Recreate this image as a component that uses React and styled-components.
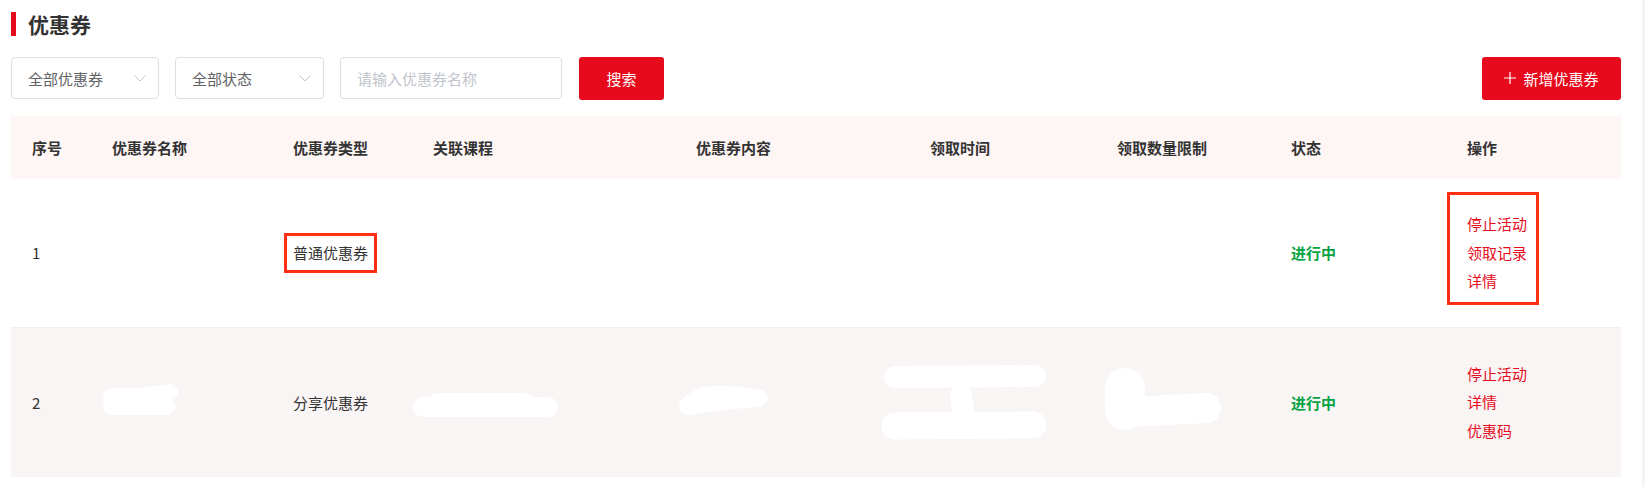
import styled, { createGlobalStyle } from 'styled-components'

const GlobalStyle = createGlobalStyle`
  html, body {
    margin: 0;
    padding: 0;
    background: #fff;
  }
  body {
    font-family: "Noto Sans CJK SC", "Noto Sans", sans-serif;
    color: #333;
  }
`

const RED = '#e60a1c'
const MARK = '#ff2e14'

const Shell = styled.div`
  display: flex;
  height: 487px;
  overflow: hidden;
`

const Page = styled.main`
  flex: 1;
  padding: 12px 21px 0 11px;
`

const ScrollStrip = styled.div`
  width: 3px;
  background: #f4f4f4;
`

const TitleRow = styled.h1`
  margin: 0;
  display: flex;
  align-items: center;
  gap: 12px;
  height: 24px;
  font-size: 21px;
  font-weight: bold;
  color: #333;
  line-height: 24px;

  &::before {
    content: '';
    width: 5px;
    height: 24px;
    background: ${RED};
  }
`

const Toolbar = styled.div`
  display: flex;
  align-items: center;
  margin-top: 21px;
  height: 42px;
`

const Select = styled.div`
  box-sizing: border-box;
  width: ${({ w }) => w}px;
  height: 42px;
  margin-right: 16px;
  padding: 0 12px 0 16px;
  border: 1px solid #dcdfe6;
  border-radius: 4px;
  display: flex;
  align-items: center;
  justify-content: space-between;
  font-size: 15px;
  color: #606266;
`

const Input = styled.div`
  box-sizing: border-box;
  width: 222px;
  height: 42px;
  margin-right: 17px;
  padding: 0 16px;
  border: 1px solid #dcdfe6;
  border-radius: 4px;
  display: flex;
  align-items: center;
  font-size: 15px;
  color: #c0c4cc;
`

const Button = styled.button`
  height: 43px;
  width: ${({ w }) => w}px;
  border: none;
  border-radius: 3px;
  background: ${RED};
  color: #fff;
  font-family: inherit;
  font-size: 15px;
  display: flex;
  align-items: center;
  justify-content: center;
  gap: 7px;
  padding: 0;
  margin-left: ${({ push }) => (push ? 'auto' : '0')};
`

const Table = styled.div`
  margin-top: 17px;
`

const Row = styled.div`
  display: grid;
  grid-template-columns: 80px 181px 140px 263px 234px 187px 174px 176px 175px;
  height: ${({ head }) => (head ? 63 : 149)}px;
  background: ${({ bg }) => bg};
  border-bottom: ${({ line }) => (line ? '1px solid #f0f0f0' : 'none')};
  box-sizing: border-box;
  font-size: 15px;
  font-weight: ${({ head }) => (head ? 'bold' : 'normal')};
  color: #333;
`

const Cell = styled.div`
  position: relative;
  display: flex;
  align-items: center;
  padding-left: 21px;
  line-height: 22px;
`

const Status = styled.span`
  color: #0aa344;
  font-weight: bold;
`

const Ops = styled.div`
  position: relative;
  display: flex;
  flex-direction: column;
  line-height: 28.5px;
  color: ${RED};
`

const Marked = styled.span`
  position: relative;
  display: inline-block;

  &::after {
    content: '';
    position: absolute;
    top: ${({ t }) => t}px;
    bottom: ${({ b }) => b}px;
    left: ${({ l }) => l}px;
    right: ${({ r }) => r}px;
    border: 3px solid ${MARK};
  }
`

const MarkedOps = styled(Ops)`
  &::after {
    content: '';
    position: absolute;
    top: -18px;
    bottom: -9px;
    left: -20px;
    right: -12px;
    border: 3px solid ${MARK};
  }
`

const Redact = styled.svg`
  position: absolute;
  left: ${({ x }) => x}px;
  top: ${({ y }) => y}px;
  overflow: visible;
`

const Chevron = () => (
  <svg width="12" height="7" viewBox="0 0 12 7">
    <polyline points="0.5,0.5 6,6 11.5,0.5" fill="none" stroke="#c0c4cc" strokeWidth="1" />
  </svg>
)

const Plus = () => (
  <svg width="12" height="12" viewBox="0 0 12 12">
    <path d="M6 0 V12 M0 6 H12" stroke="#fff" strokeWidth="1.2" />
  </svg>
)

const Blob = ({ x, y, w, h, strokes }) => (
  <Redact x={x} y={y} width={w} height={h} viewBox={`0 0 ${w} ${h}`}>
    {strokes.map(([d, sw], i) => (
      <path key={i} d={d} fill="none" stroke="#fff" strokeWidth={sw} strokeLinecap="round" strokeLinejoin="round" />
    ))}
  </Redact>
)

const heads = ['序号', '优惠券名称', '优惠券类型', '关联课程', '优惠券内容', '领取时间', '领取数量限制', '状态', '操作']

const App = () => {
  return (
    <Shell>
      <GlobalStyle />
      <Page>
        <TitleRow>优惠券</TitleRow>
        <Toolbar>
          <Select w={148}>
            全部优惠券
            <Chevron />
          </Select>
          <Select w={149}>
            全部状态
            <Chevron />
          </Select>
          <Input>请输入优惠券名称</Input>
          <Button w={85}>搜索</Button>
          <Button w={139} push>
            <Plus />
            新增优惠券
          </Button>
        </Toolbar>

        <Table>
          <Row head bg="#fef5f5">
            {heads.map((h) => (
              <Cell key={h}>{h}</Cell>
            ))}
          </Row>

          <Row line bg="#fff">
            <Cell>1</Cell>
            <Cell />
            <Cell>
              <Marked t={-9} b={-9} l={-9} r={-9}>普通优惠券</Marked>
            </Cell>
            <Cell />
            <Cell />
            <Cell />
            <Cell />
            <Cell>
              <Status>进行中</Status>
            </Cell>
            <Cell>
              <MarkedOps>
                <span>停止活动</span>
                <span>领取记录</span>
                <span>详情</span>
              </MarkedOps>
            </Cell>
          </Row>

          <Row bg="#f9f5f5">
            <Cell>2</Cell>
            <Cell>
              <Blob
                x={11}
                y={56}
                w={76}
                h={32}
                strokes={[
                  ['M9 12 L42 12 Q56 10 68 8', 16],
                  ['M10 22 L64 22', 18],
                ]}
              />
            </Cell>
            <Cell>分享优惠券</Cell>
            <Cell>
              <Blob
                x={0}
                y={65}
                w={146}
                h={24}
                strokes={[
                  ['M11 14 L136 14', 20],
                  ['M26 11 L112 11', 22],
                ]}
              />
            </Cell>
            <Cell>
              <Blob
                x={2}
                y={58}
                w={91}
                h={32}
                strokes={[
                  ['M10 20 Q20 8 42 8 Q62 8 83 12', 16],
                  ['M12 22 Q40 17 82 14', 14],
                ]}
              />
            </Cell>
            <Cell>
              <Blob
                x={-26}
                y={38}
                w={164}
                h={74}
                strokes={[
                  ['M12 11 L152 10', 22],
                  ['M78 29 L80 42', 22],
                  ['M12 60 L150 59', 27],
                ]}
              />
            </Cell>
            <Cell>
              <Blob
                x={9}
                y={44}
                w={113}
                h={55}
                strokes={[
                  ['M20 16 L20 38', 40],
                  ['M22 40 L101 36', 30],
                ]}
              />
            </Cell>
            <Cell>
              <Status>进行中</Status>
            </Cell>
            <Cell>
              <Ops>
                <span>停止活动</span>
                <span>详情</span>
                <span>优惠码</span>
              </Ops>
            </Cell>
          </Row>
        </Table>
      </Page>
      <ScrollStrip />
    </Shell>
  )
}

export default App
